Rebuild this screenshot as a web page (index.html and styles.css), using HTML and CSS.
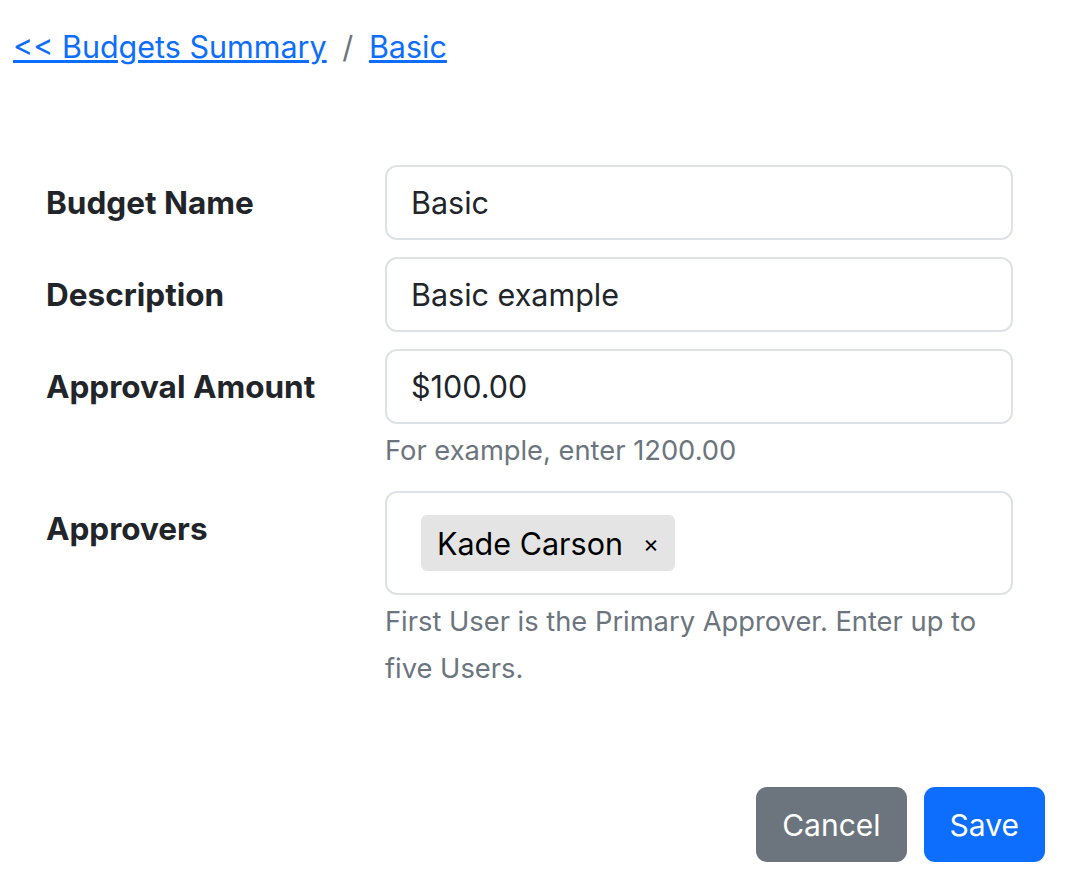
FILE: index.html
```html
<!DOCTYPE html>
<html>
<head>
    <meta name="viewport" content="width=device-width, initial-scale=1">
    <link rel="stylesheet" href="styles.css">
</head>
<body>

<nav class="crumbs">
    <a href="#">&lt;&lt; Budgets Summary</a>
    <span class="sep">/</span>
    <a href="#">Basic</a>
</nav>

<form class="budget-form">
    <div class="row">
        <label class="row-label">Budget Name</label>
        <div class="field">
            <input class="input" type="text" value="Basic">
        </div>
    </div>

    <div class="row">
        <label class="row-label">Description</label>
        <div class="field">
            <input class="input" type="text" value="Basic example">
        </div>
    </div>

    <div class="row">
        <label class="row-label">Approval Amount</label>
        <div class="field">
            <input class="input" type="text" value="$100.00">
            <div class="help">For example, enter 1200.00</div>
        </div>
    </div>

    <div class="row">
        <label class="row-label">Approvers</label>
        <div class="field">
            <div class="tag-box">
                <span class="tag">Kade Carson <span class="tag-x">&times;</span></span>
            </div>
            <div class="help">First User is the Primary Approver. Enter up to five Users.</div>
        </div>
    </div>

    <div class="actions">
        <button type="button" class="btn cancel">Cancel</button>
        <button type="button" class="btn save">Save</button>
    </div>
</form>

</body>
</html>
```

FILE: styles.css
```css
* {box-sizing: border-box;}
body {
    margin: 0;
    padding: 0 13px;
    font-family: Inter, "Liberation Sans", Arial, sans-serif;
    color: #212529;
    background: #fff;
}

/* Breadcrumb at the top */
.crumbs {
    padding-top: 26px;
    font-size: 30.5px;
    line-height: 42px;
}
.crumbs a {
    color: #0d6efd;
}
.crumbs .sep {
    color: #6c757d;
    margin: 0 7px;
}

.budget-form {
    margin-top: 97px;
    padding-left: 33px;
    width: 1032px;
}

.row {
    display: grid;
    grid-template-columns: 339px 628px;
    margin-bottom: 17px;
}

.row-label {
    font-weight: bold;
    font-size: 31.5px;
    line-height: 75px;
}

.input {
    display: block;
    width: 100%;
    height: 75px;
    padding: 0 24px;
    font: inherit;
    font-size: 30.5px;
    color: #212529;
    border: 2px solid #dee2e6;
    border-radius: 12px;
    outline: none;
}

.help {
    color: #6c757d;
    font-size: 27.3px;
    line-height: 47px;
    margin-top: 3px;
}

/* Select box with the chosen users */
.tag-box {
    height: 104px;
    border: 2px solid #dee2e6;
    border-radius: 12px;
    padding: 22px 34px;
}
.tag {
    display: inline-flex;
    align-items: center;
    height: 56px;
    padding: 0 16px;
    background: #e4e4e4;
    border-radius: 6px;
    font-size: 30.5px;
    color: #000;
}
.tag-x {
    font-size: 24px;
    margin-left: 20px;
}

.actions {
    display: flex;
    justify-content: flex-end;
    gap: 17px;
    margin-top: 95px;
}
.btn {
    height: 75px;
    padding: 0 26px;
    border: none;
    border-radius: 11px;
    font: inherit;
    font-size: 30px;
    color: #fff;
    cursor: pointer;
}
.cancel {background-color: #6c757d;}
.save {background-color: #0d6efd;}
```
